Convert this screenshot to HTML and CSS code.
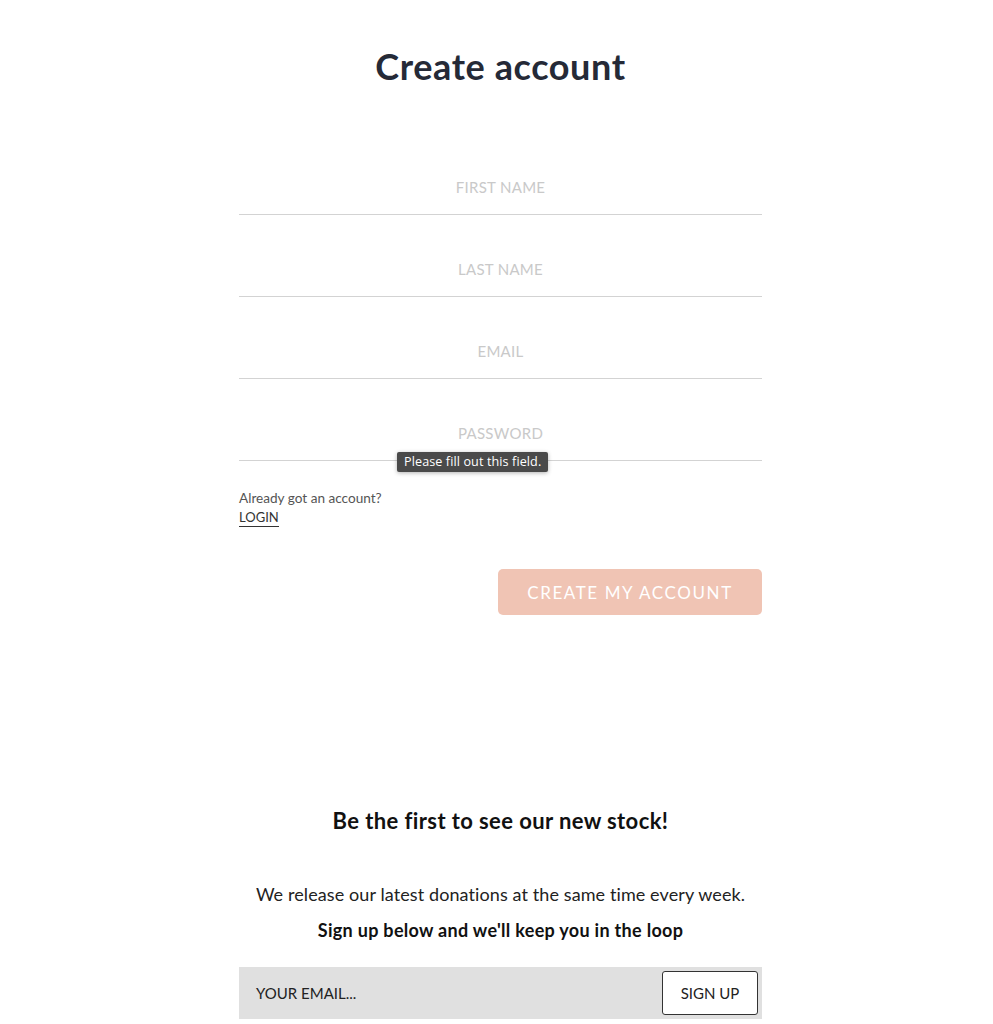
FILE: index.html
```html
<!DOCTYPE html>
<html>
<head>
<meta charset="utf-8">
<link rel="stylesheet" href="styles.css">
</head>
<body>
<main class="page">
  <h1 class="title">Create account</h1>
  <form class="form">
    <div class="field"><input class="input" type="text" placeholder="FIRST NAME"></div>
    <div class="field"><input class="input" type="text" placeholder="LAST NAME"></div>
    <div class="field"><input class="input" type="email" placeholder="EMAIL"></div>
    <div class="field field-pw"><input class="input" type="password" placeholder="PASSWORD">
      <div class="tooltip">Please fill out this field.</div>
    </div>
    <p class="already">Already got an account?</p>
    <a class="login" href="#">LOGIN</a>
    <div class="actions"><button class="create" type="button">CREATE MY ACCOUNT</button></div>
  </form>
  <section class="news">
    <h2 class="news-title">Be the first to see our new stock!</h2>
    <p class="news-text">We release our latest donations at the same time every week.</p>
    <p class="news-strong">Sign up below and we'll keep you in the loop</p>
    <div class="signup">
      <span class="signup-ph">YOUR EMAIL...</span>
      <button class="signup-btn" type="button">SIGN UP</button>
    </div>
  </section>
</main>
</body>
</html>
```
FILE: styles.css
```css
* { box-sizing: border-box; }
html, body { margin: 0; padding: 0; background: #fff; }
body { padding-left: 8px; font-family: Lato, "Liberation Sans", sans-serif; color: #222; }
.page { width: 523px; margin: 0 auto; }
.title {
  margin: 0; padding-top: 44px;
  text-align: center; font-size: 36px; line-height: 44px; font-weight: 700;
  color: #252a37; letter-spacing: 0.6px;
}
.form { margin-top: 72px; }
.field { position: relative; margin-bottom: 27px; }
.input {
  display: block; width: 100%; height: 55px; border: 0; border-bottom: 1px solid #d3d3d3;
  font-family: inherit; font-size: 15px; text-align: center; background: transparent; outline: none;
  padding: 0; letter-spacing: 0.3px;
}
.input::placeholder { color: #c9c9c9; }
.field-pw { margin-bottom: 0; }
.tooltip {
  position: absolute; left: 158px; top: 46px;
  background: #4a4a4a; color: #fff; font-size: 12.6px; line-height: 20px; padding: 0 7px;
  border-radius: 2px; box-shadow: 0 1px 4px rgba(0,0,0,0.3); letter-spacing: 0.1px;
  font-family: "Open Sans", sans-serif;
}
.already { margin: 29px 0 0; font-size: 13.6px; line-height: 16px; color: #555; }
.login {
  display: inline-block; margin-top: 3px; font-size: 13px; line-height: 16px; color: #333;
  text-decoration: none; border-bottom: 1px solid #333; padding-bottom: 1px;
}
.actions { display: flex; justify-content: flex-end; margin-top: 42px; }
.create {
  width: 264px; height: 46px; border: 0; border-radius: 5px; background: #f0c4b4; color: #fff;
  font-family: inherit; font-size: 17px; letter-spacing: 1.6px; padding: 0;
}
.news { margin-top: 192px; text-align: center; }
.news-title { margin: 0; font-size: 22px; line-height: 28px; font-weight: 700; color: #111; letter-spacing: 0.4px; }
.news-text { margin: 48px 0 0; font-size: 18px; line-height: 22px; color: #222; letter-spacing: 0.1px; }
.news-strong { margin: 14px 0 0; font-size: 18px; line-height: 22px; font-weight: 700; color: #111; letter-spacing: 0.3px; }
.signup {
  margin-top: 26px; height: 52px; background: #e0e0e0; display: flex; align-items: center;
  justify-content: space-between; padding: 0 4px 0 17px;
}
.signup-ph { font-size: 15px; color: #222; }
.signup-btn {
  height: 44px; width: 96px; background: #fff; border: 1px solid #333; border-radius: 3px;
  font-family: inherit; font-size: 15px; color: #222; padding: 0;
}
```
